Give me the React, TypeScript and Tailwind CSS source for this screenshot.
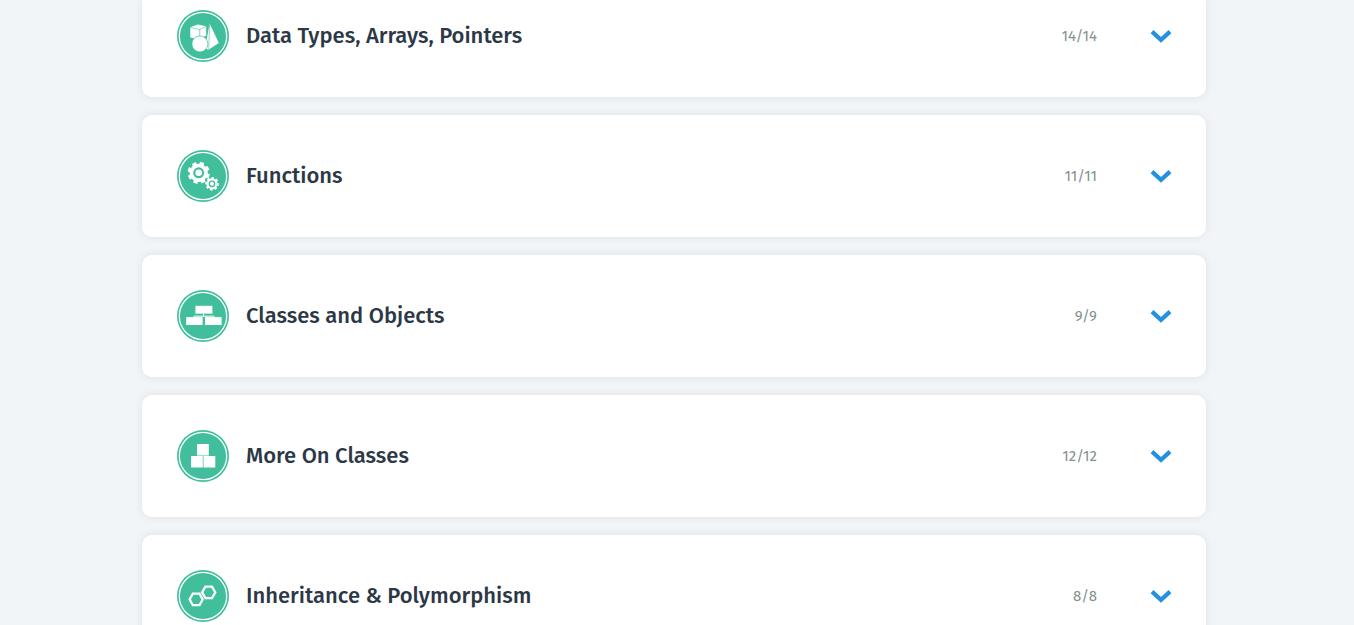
import type { ReactNode } from 'react';

const GREEN = '#41bf9d';

function gearPath(cx: number, cy: number, inner: number, outer: number, teeth: number, turn: number) {
  const points: string[] = [];
  const step = (Math.PI * 2) / teeth;
  for (let i = 0; i < teeth; i++) {
    const a = i * step + turn;
    const corners: [number, number][] = [
      [-0.32, inner],
      [-0.24, outer],
      [0.24, outer],
      [0.32, inner],
    ];
    for (const [offset, radius] of corners) {
      const t = a + offset * step;
      points.push(`${(cx + Math.cos(t) * radius).toFixed(2)} ${(cy + Math.sin(t) * radius).toFixed(2)}`);
    }
  }
  return `M${points.join('L')}Z`;
}

function Badge({ children }: { children: ReactNode }) {
  return (
    <svg viewBox="0 0 52 52" className="size-[52px] shrink-0" aria-hidden="true">
      <circle cx="26" cy="26" r="26" fill={GREEN} />
      <circle cx="26" cy="26" r="23.7" fill="none" stroke="#fff" strokeWidth="1.3" />
      {children}
    </svg>
  );
}

function Shapes() {
  return (
    <Badge>
      <path d="M13.3 17.2 20.6 14.6 29.2 16.2V25.5L22.5 29.5 13.3 27.6Z" fill="#fff" />
      <path d="M13.5 17.5 22.7 19.6 29 16.4M22.7 19.6V27" fill="none" stroke={GREEN} strokeWidth="0.6" />
      <path d="M32.6 13.5 41.8 33 31.5 39.8 28 38.5Z" fill="#fff" />
      <path d="M32.6 14 31.7 39.5" fill="none" stroke={GREEN} strokeWidth="0.6" />
      <circle cx="22.9" cy="33.9" r="8" fill="#fff" stroke={GREEN} strokeWidth="0.7" />
    </Badge>
  );
}

function Gears() {
  return (
    <Badge>
      <path d={gearPath(21.7, 22.8, 9.1, 11.2, 8, 0.32)} fill="#fff" />
      <circle cx="21.7" cy="22.8" r="4.4" fill="#fff" stroke={GREEN} strokeWidth="2.2" />
      <path d={gearPath(35, 33.8, 5.4, 6.9, 8, 0.12)} fill="#fff" />
      <circle cx="35" cy="33.8" r="2.7" fill="#fff" stroke={GREEN} strokeWidth="1.3" />
    </Badge>
  );
}

function Hierarchy() {
  return (
    <Badge>
      <rect x="18.4" y="15.8" width="17" height="7.8" fill="#fff" />
      <path d="M26.6 23.5V26.6M17 27.5V26.2H37V27.5" fill="none" stroke="#fff" strokeWidth="1" />
      <rect x="9.2" y="27.1" width="16.4" height="7.9" fill="#fff" />
      <rect x="28" y="27.1" width="16.6" height="7.9" fill="#fff" />
    </Badge>
  );
}

function Blocks() {
  return (
    <Badge>
      <rect x="20" y="14" width="11.8" height="11.4" rx="0.5" fill="#fff" />
      <rect x="14" y="26" width="11.8" height="11.6" rx="0.5" fill="#fff" />
      <rect x="26.5" y="26" width="11.8" height="11.6" rx="0.5" fill="#fff" />
    </Badge>
  );
}

function Hexagons() {
  return (
    <Badge>
      <g fill="none" stroke="#fff" strokeWidth="2.2">
        <path d="M12.6 29.4 15.8 23.7H22.5L25.7 29.4 22.5 35.2H15.8Z" />
        <path d="M25.1 22.4 28.4 16.7H35L38.3 22.4 35 28.1H28.4Z" />
      </g>
    </Badge>
  );
}

const modules = [
  { title: 'Data Types, Arrays, Pointers', done: '14/14', icon: <Shapes /> },
  { title: 'Functions', done: '11/11', icon: <Gears /> },
  { title: 'Classes and Objects', done: '9/9', icon: <Hierarchy /> },
  { title: 'More On Classes', done: '12/12', icon: <Blocks /> },
  { title: 'Inheritance & Polymorphism', done: '8/8', icon: <Hexagons /> },
];

export default function App() {
  return (
    <main className="h-screen overflow-hidden bg-[#f1f5f8] pr-1.5 font-['Fira_Sans','Noto_Sans',sans-serif]">
      <ul className="mx-auto flex max-w-[1064px] flex-col gap-[18px]">
        {modules.map((module) => (
          <li
            key={module.title}
            className="rounded-[10px] bg-white shadow-[0_0_8px_rgba(45,62,80,0.1)] first:rounded-t-none"
          >
            <button
              type="button"
              aria-expanded="false"
              className={`flex w-full cursor-pointer items-center pr-[34px] pl-[35px] text-left ${
                module === modules[0] ? 'pt-2.5 pb-[35px]' : 'py-[35px]'
              }`}
            >
              {module.icon}
              <span className="ml-[17px] flex-1 text-[22px] leading-7 font-medium text-[#2d3846]">
                {module.title}
              </span>
              <span className="mr-[53px] text-[15px] leading-5 text-[#83918c]">{module.done}</span>
              <svg viewBox="0 0 22 14" className="h-3.5 w-[22px] shrink-0" aria-hidden="true">
                <path d="M2 2.6 11 10.8 20 2.6" fill="none" stroke="#2491e0" strokeWidth="4.2" />
              </svg>
            </button>
          </li>
        ))}
      </ul>
    </main>
  );
}
